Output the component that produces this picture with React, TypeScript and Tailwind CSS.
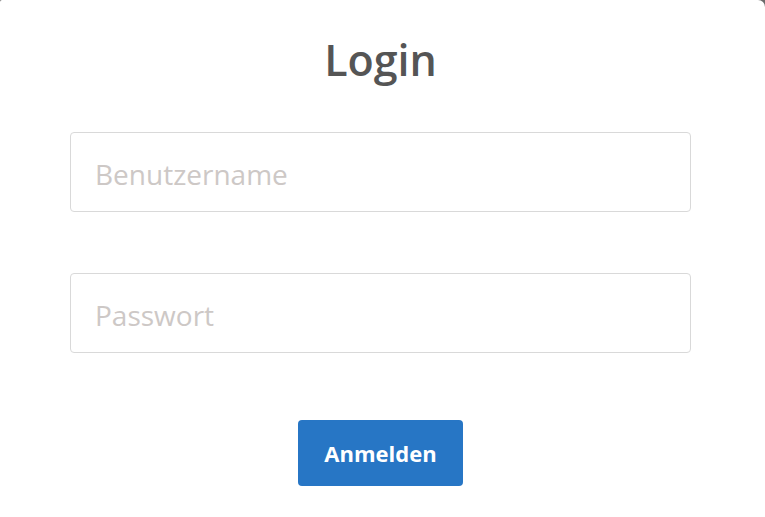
export default function App() {
  return (
    <div className="h-[517px] w-[765px] bg-[#6b6b6b]">
      <div
        className="flex h-full flex-col items-center rounded-tl-[2px] rounded-tr-[7px] bg-white pt-[34px]"
        style={{ fontFamily: '"Open Sans", "Noto Sans", sans-serif' }}
      >
        <h1 className="ml-[-4px] text-[43px] font-semibold leading-[52px] text-[#555555]">Login</h1>
        <form className="mt-[46px] flex w-[621px] ml-[-4px] flex-col items-center" onSubmit={(e) => e.preventDefault()}>
          <input
            type="text"
            placeholder="Benutzername"
            className="h-[80px] w-full rounded-[4px] border border-[#d9d9d9] px-[24px] pt-[4px] text-[28px] text-[#333] outline-none placeholder:text-[#cdc8c6]"
          />
          <input
            type="password"
            placeholder="Passwort"
            className="mt-[61px] h-[80px] w-full rounded-[4px] border border-[#d9d9d9] px-[24px] pt-[4px] text-[28px] text-[#333] outline-none placeholder:text-[#cdc8c6]"
          />
          <button
            type="submit"
            className="mt-[67px] h-[66px] w-[165px] rounded-[4px] bg-[#2776c5] text-[22px] font-bold text-white"
          >
            Anmelden
          </button>
        </form>
      </div>
    </div>
  )
}
